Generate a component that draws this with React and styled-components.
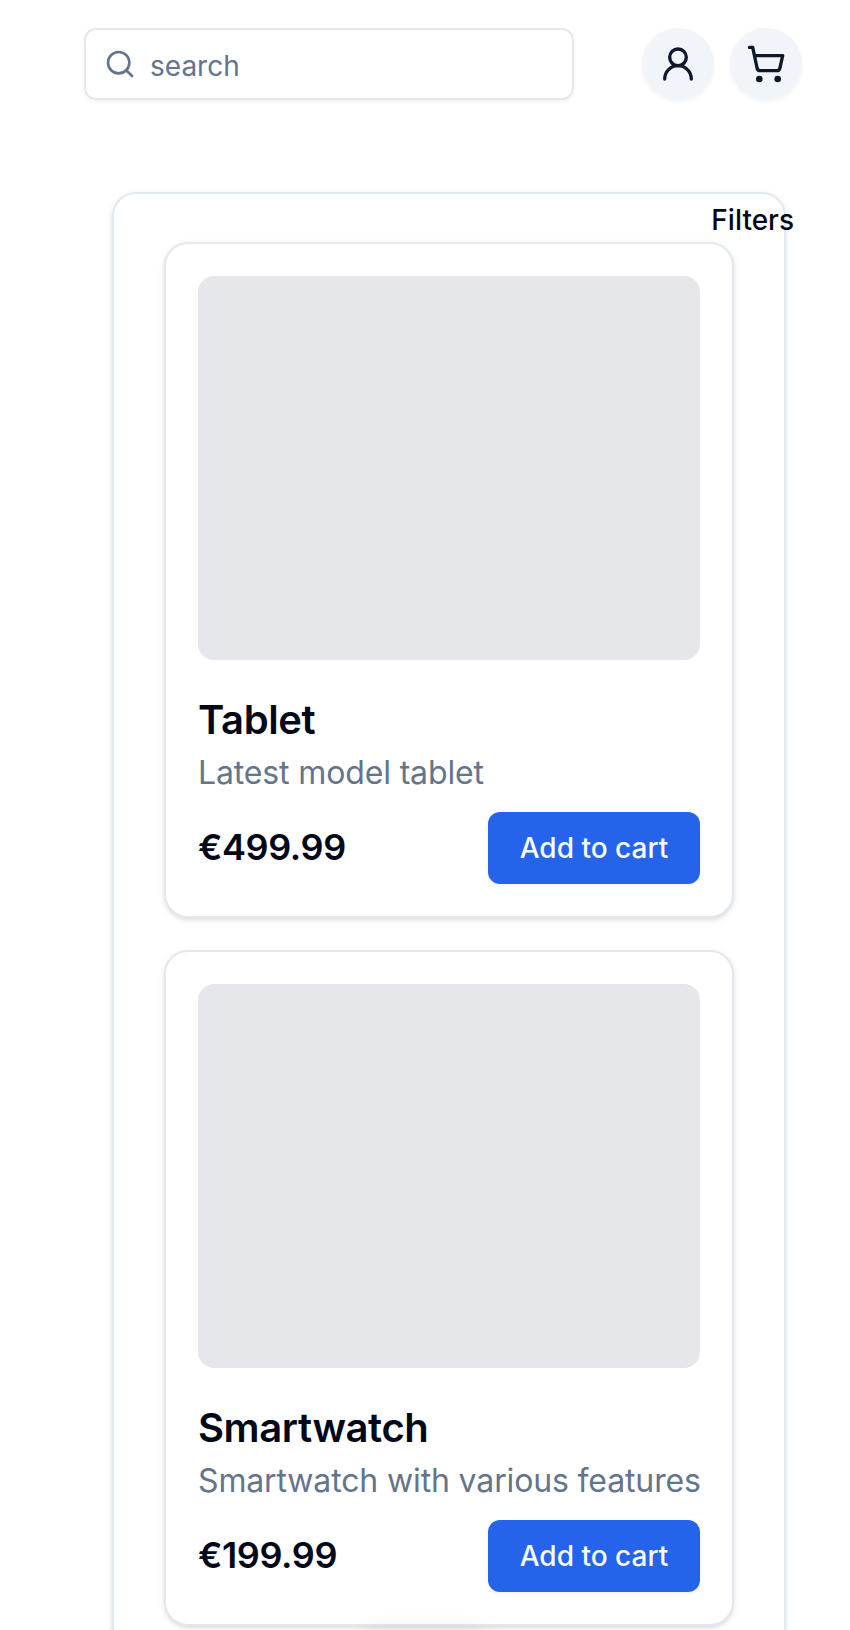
import React from "react";
import styled, { createGlobalStyle } from "styled-components";
import { Search } from "lucide-react";

const GlobalStyle = createGlobalStyle`
  *, *::before, *::after { box-sizing: border-box; }
  body {
    margin: 0;
    background: #fff;
    color: #020817;
    font-family: Inter, "Liberation Sans", sans-serif;
    -webkit-font-smoothing: antialiased;
  }
`;

const Page = styled.div`
  position: relative;
  height: 1630px;
  overflow: hidden;
  background: #fff;
`;

const Header = styled.header`
  display: flex;
  align-items: center;
  height: 100px;
  padding: 28px 48px 0 84px;
`;

const SearchBox = styled.label`
  display: flex;
  align-items: center;
  gap: 14px;
  width: 490px;
  height: 72px;
  margin-right: auto;
  padding: 0 18px;
  color: #64748b;
  border: 2px solid #e2e8f0;
  border-radius: 12px;
  box-shadow: 0 2px 4px rgba(0, 0, 0, 0.05);

  svg { flex: none; }
`;

const SearchInput = styled.input`
  flex: 1;
  min-width: 0;
  padding: 4px 0 0;
  font: 400 28px/40px Inter, "Liberation Sans", sans-serif;
  color: inherit;
  background: transparent;
  border: 0;
  outline: 0;

  &::placeholder { color: #64748b; opacity: 1; }
`;

const Actions = styled.nav`
  display: flex;
  gap: 16px;
`;

const RoundButton = styled.button`
  display: flex;
  align-items: center;
  justify-content: center;
  width: 72px;
  height: 72px;
  padding: 0;
  color: #0f172a;
  background: #f1f5f9;
  border: 0;
  border-radius: 50%;
  box-shadow: 0 2px 4px rgba(0, 0, 0, 0.05);
`;

const Catalog = styled.main`
  position: relative;
  display: flex;
  flex-direction: column;
  gap: 32px;
  width: 674px;
  height: 1500px;
  margin: 92px 0 0 112px;
  padding: 48px 50px 0;
  border: 2px solid #e2e8f0;
  border-radius: 24px;
  box-shadow: 0 2px 6px rgba(0, 0, 0, 0.1), 0 2px 4px -2px rgba(0, 0, 0, 0.1);
`;

const Filters = styled.button`
  position: absolute;
  top: 6px;
  right: -10px;
  padding: 0;
  color: #020817;
  font: 500 28px/40px Inter, "Liberation Sans", sans-serif;
  background: transparent;
  border: 0;
`;

const Card = styled.article`
  flex: none;
  width: 570px;
  height: 676px;
  padding: 32px;
  background: #fff;
  border: 2px solid #e2e8f0;
  border-radius: 24px;
  box-shadow: 0 2px 6px rgba(0, 0, 0, 0.1), 0 2px 4px -2px rgba(0, 0, 0, 0.1);
`;

const Thumbnail = styled.div`
  height: 384px;
  background: #e5e7eb;
  border-radius: 16px;
`;

const Title = styled.h3`
  margin: 32px 0 0;
  font-size: 40px;
  font-weight: 600;
  line-height: 56px;
  letter-spacing: -0.4px;
`;

const Description = styled.p`
  margin: 0;
  padding-top: 1px;
  color: #64748b;
  font-size: 32px;
  line-height: 48px;
  letter-spacing: -0.14px;
  white-space: nowrap;
`;

const Purchase = styled.div`
  display: flex;
  align-items: center;
  justify-content: space-between;
  margin-top: 15px;
`;

const Price = styled.span`
  padding-bottom: 2px;
  font-size: 36px;
  font-weight: 600;
  line-height: 56px;
  letter-spacing: -0.4px;
`;

const CartButton = styled.button`
  width: 212px;
  height: 72px;
  padding: 0;
  color: #f8fafc;
  font: 500 28px/40px Inter, "Liberation Sans", sans-serif;
  white-space: nowrap;
  background: #2563eb;
  border: 0;
  border-radius: 12px;
  box-shadow: 0 2px 4px rgba(0, 0, 0, 0.05);
`;

/* Floating bar docked just past the bottom edge; only its shadow shows. */
const Dock = styled.div`
  position: absolute;
  left: 50%;
  bottom: -42px;
  width: 130px;
  height: 36px;
  border-radius: 18px;
  transform: translateX(-50%);
  box-shadow: 0 0 24px rgba(0, 0, 0, 0.15);
`;

const products = [
  { name: "Tablet", description: "Latest model tablet", price: "€499.99" },
  { name: "Smartwatch", description: "Smartwatch with various features", price: "€199.99" },
];

const UserIcon = () => (
  <svg width="40" height="40" viewBox="0 0 40 40" fill="none" stroke="currentColor" strokeWidth="3.33" strokeLinecap="round" strokeLinejoin="round">
    <circle cx="20" cy="13.33" r="8.33" />
    <path d="M6.7 35a13.3 13.3 0 0 1 26.6 0" />
  </svg>
);

const CartIcon = () => (
  <svg width="40" height="40" viewBox="0 0 40 40" fill="none" stroke="currentColor" strokeWidth="3.33" strokeLinecap="round" strokeLinejoin="round">
    <circle cx="13.3" cy="35" r="1.67" />
    <circle cx="31.7" cy="35" r="1.67" />
    <path d="M3.4 3.4h3.3l4.4 20.7a3.3 3.3 0 0 0 3.3 2.6h16.3a3.3 3.3 0 0 0 3.2-2.6l2.8-12.4H8.5" />
  </svg>
);

export default function App() {
  return (
    <Page>
      <GlobalStyle />
      <Header>
        <SearchBox>
          <Search size={32} strokeWidth={2} />
          <SearchInput placeholder="search" />
        </SearchBox>
        <Actions>
          <RoundButton aria-label="Account"><UserIcon /></RoundButton>
          <RoundButton aria-label="Cart"><CartIcon /></RoundButton>
        </Actions>
      </Header>
      <Catalog>
        <Filters>Filters</Filters>
        {products.map((p) => (
          <Card key={p.name}>
            <Thumbnail />
            <Title>{p.name}</Title>
            <Description>{p.description}</Description>
            <Purchase>
              <Price>{p.price}</Price>
              <CartButton>Add to cart</CartButton>
            </Purchase>
          </Card>
        ))}
      </Catalog>
      <Dock />
    </Page>
  );
}
